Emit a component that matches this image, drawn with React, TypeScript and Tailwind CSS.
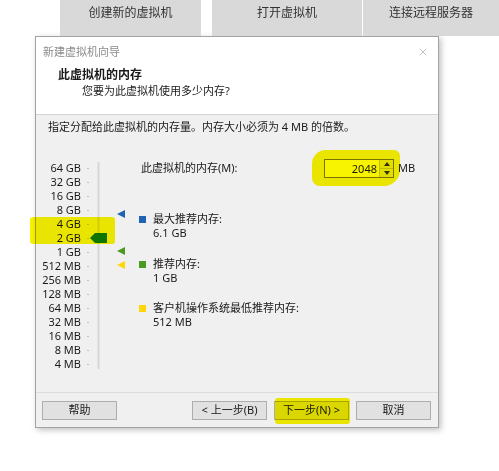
import { X } from 'lucide-react';

const ticks = [
  '64 GB', '32 GB', '16 GB', '8 GB', '4 GB', '2 GB', '1 GB',
  '512 MB', '256 MB', '128 MB', '64 MB', '32 MB', '16 MB', '8 MB', '4 MB',
];

const legend = [
  { color: 'bg-[#1f63b3]', title: '最大推荐内存:', value: '6.1 GB', gap: 'mt-[34px]' },
  { color: 'bg-[#4a9a22]', title: '推荐内存:', value: '1 GB', gap: 'mt-[17px]' },
  { color: 'bg-[#ffd60a]', title: '客户机操作系统最低推荐内存:', value: '512 MB', gap: 'mt-[16px]' },
];

function Pointer({ color, top }: { color: string; top: string }) {
  return (
    <svg className={`absolute left-[81px] ${top}`} width="8" height="8" viewBox="0 0 8 8" aria-hidden="true">
      <polygon points="0,4 8,0 8,8" fill={color} />
    </svg>
  );
}

function Button({ children, className = '' }: { children: React.ReactNode; className?: string }) {
  return (
    <div className={`flex h-[19px] w-[75px] items-center justify-center border border-[#adadad] bg-[#e1e1e1] text-[11px] text-[#1a1a1a] ${className}`}>
      {children}
    </div>
  );
}

export default function App() {
  return (
    <div className="relative h-[471px] w-[499px] overflow-hidden bg-white font-['Noto_Sans','Noto_Sans_CJK_SC',sans-serif] text-[#1a1a1a]">
      {/* launcher tiles behind the wizard */}
      <div className="flex h-[36px] text-[12px] leading-[18px] text-[#333]">
        <div className="ml-[60px] w-[141px] bg-[#d9d9d9] pt-[4px] text-center">创建新的虚拟机</div>
        <div className="ml-[11px] w-[150px] bg-[#d9d9d9] pt-[4px] text-center">打开虚拟机</div>
        <div className="ml-[1px] flex-1 bg-[#d9d9d9] pt-[4px] text-center">连接远程服务器</div>
      </div>

      {/* wizard dialog */}
      <div className="ml-[35px] flex h-[392px] w-[404px] flex-col border border-[#a3a3a3] bg-[#f0f0f0] shadow-[2px_2px_6px_rgba(0,0,0,0.25)]">
        <div className="h-[78px] border-b border-[#d5d5d5] bg-white">
          <div className="flex h-[30px] items-center justify-between pl-[7px] pr-[9px]">
            <span className="text-[11px] text-[#8a8a8a]">新建虚拟机向导</span>
            <X size={12} strokeWidth={1} className="text-[#888]" />
          </div>
          <div className="pl-[22px] text-[12px] font-bold leading-[16px]">此虚拟机的内存</div>
          <div className="pl-[46px] text-[11px] leading-[16px]">您要为此虚拟机使用多少内存?</div>
        </div>

        <div className="flex-1">
          <p className="pl-[12px] pt-[4px] text-[11px] leading-[16px]">指定分配给此虚拟机的内存量。内存大小必须为 4 MB 的倍数。</p>

          <div className="mt-[26px] flex">
            {/* memory slider */}
            <div className="relative w-[94px]">
              <div className="absolute left-[61px] top-[1px] h-[207px] w-[3px] border-x border-[#e4e4e4] bg-[#d6d6d6]" />
              {ticks.map((t) => (
                <div key={t} className="flex h-[14px] items-center">
                  <span className="w-[45px] text-right text-[11px] leading-[14px]">{t}</span>
                  <span className="ml-[6px] h-[1px] w-[2px] bg-[#c4c4c4]" />
                </div>
              ))}
              <svg className="absolute left-[54px] top-[72px]" width="17" height="10" viewBox="0 0 17 10" aria-hidden="true">
                <polygon points="0,5 5,0 17,0 17,10 5,10" fill="#0d7a1c" />
              </svg>
              <Pointer color="#1f63b3" top="top-[49px]" />
              <Pointer color="#4a9a22" top="top-[86px]" />
              <Pointer color="#ffd60a" top="top-[100px]" />
            </div>

            {/* memory value and legend */}
            <div className="flex-1">
              <div className="-mt-[3px] flex h-[20px] items-center">
                <span className="w-[194px] pl-[11px] text-[11px]">此虚拟机的内存(M):</span>
                <div className="flex h-[19px] w-[70px] border border-[#7a7a7a] bg-white">
                  <span className="flex-1 pr-[2px] text-right text-[11px] leading-[17px]">2048</span>
                  <div className="flex w-[14px] flex-col border-l border-[#c8c8c8] bg-[#e8e8e8]">
                    <div className="flex flex-1 items-center justify-center">
                      <svg width="6" height="4" viewBox="0 0 6 4"><polygon points="0,4 3,0 6,4" fill="#333" /></svg>
                    </div>
                    <div className="flex flex-1 items-center justify-center border-t border-[#c8c8c8]">
                      <svg width="6" height="4" viewBox="0 0 6 4"><polygon points="0,0 6,0 3,4" fill="#333" /></svg>
                    </div>
                  </div>
                </div>
                <span className="ml-[4px] text-[11px]">MB</span>
              </div>

              {legend.map((l) => (
                <div key={l.title} className={`flex pl-[9px] ${l.gap}`}>
                  <span className={`mt-[4px] h-[7px] w-[7px] ${l.color}`} />
                  <div className="ml-[7px] text-[11px] leading-[14px]">
                    <div>{l.title}</div>
                    <div>{l.value}</div>
                  </div>
                </div>
              ))}
            </div>
          </div>
        </div>

        <div className="flex h-[35px] border-t border-[#dcdcdc] pl-[6px] pr-[7px] pt-[8px]">
          <Button>帮助</Button>
          <Button className="ml-auto">&lt; 上一步(B)</Button>
          <Button className="ml-[7px]">下一步(N) &gt;</Button>
          <Button className="ml-[7px]">取消</Button>
        </div>
      </div>

      {/* marker highlights drawn over the screenshot */}
      <div className="pointer-events-none absolute left-[30px] top-[217px] h-[27px] w-[85px] rounded-[3px] bg-[#f8f400] mix-blend-multiply" />
      <div className="pointer-events-none absolute left-[312px] top-[150px] h-[36px] w-[88px] rounded-[14px_6px_16px_8px] bg-[#f8f400] mix-blend-multiply" />
      <div className="pointer-events-none absolute left-[275px] top-[398px] h-[26px] w-[75px] rounded-[3px] bg-[#f8f400] mix-blend-multiply" />
    </div>
  );
}
